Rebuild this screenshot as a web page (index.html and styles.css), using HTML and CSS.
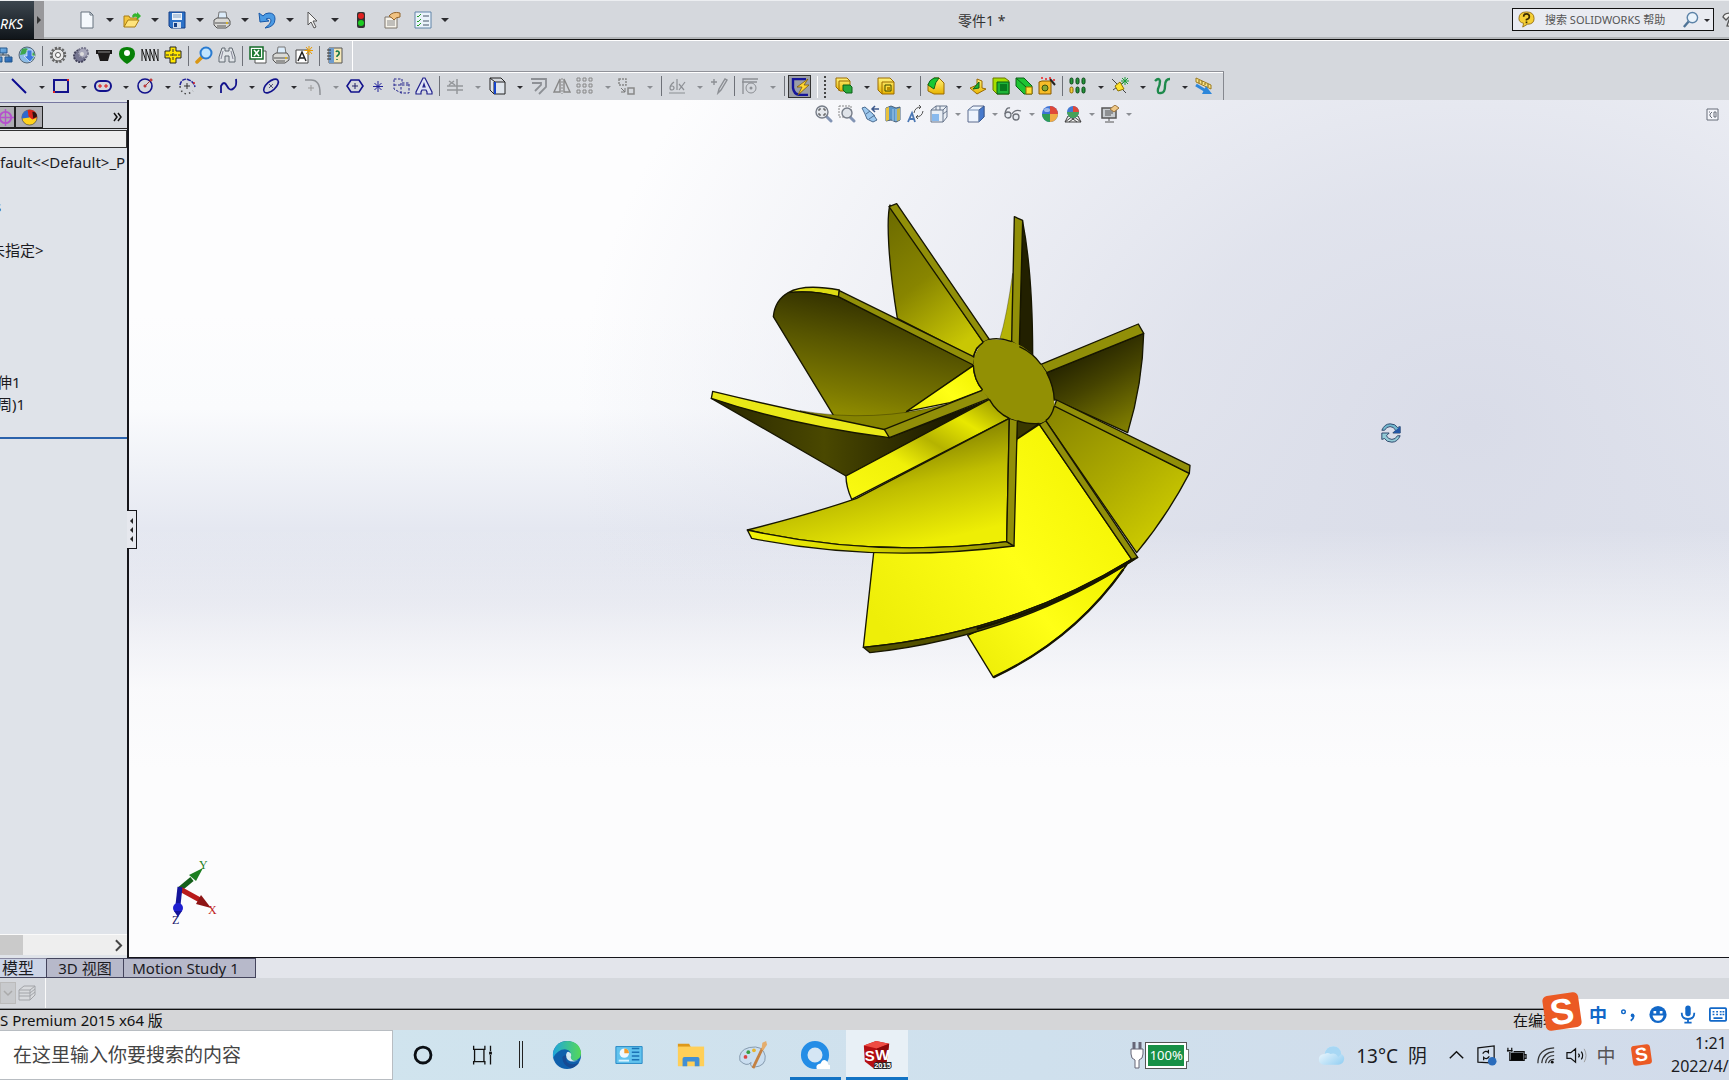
FILE: index.html
```html
<!DOCTYPE html>
<html lang="zh-CN">
<head>
<meta charset="utf-8">
<title>零件1</title>
<link rel="stylesheet" href="styles.css">
</head>
<body>
<svg class="sprite" aria-hidden="true">
  <defs>
    <linearGradient id="gBlue" x1="0" y1="0" x2="1" y2="1"><stop offset="0" stop-color="#8cc8f4"/><stop offset="1" stop-color="#1c5cae"/></linearGradient>
    <linearGradient id="gGold" x1="0" y1="0" x2="0" y2="1"><stop offset="0" stop-color="#fff27a"/><stop offset="1" stop-color="#e8b400"/></linearGradient>
    <linearGradient id="gEdge" x1="0" y1="0" x2="1" y2="0"><stop offset="0" stop-color="#1fa5dc"/><stop offset="1" stop-color="#56d957"/></linearGradient>
    <linearGradient id="gCloud" x1="0" y1="0" x2="1" y2="1"><stop offset="0" stop-color="#fff"/><stop offset="1" stop-color="#8fcdf2"/></linearGradient>
  </defs>
  <symbol id="new" viewBox="0 0 18 18"><path d="M3 1h9l3 3v13H3z" fill="#f4f8fc" stroke="#66727f"/><path d="M12 1v3h3" fill="none" stroke="#66727f"/></symbol>
  <symbol id="open" viewBox="0 0 18 18"><path d="M1 16V5h5l1 2h7v3" fill="#f4c63c" stroke="#a87c12"/><path d="M1 16l4-7h11l-4 7z" fill="#ffe47c" stroke="#a87c12"/><path d="M9 5q2-4 5-2V1l4 4-4 4V6q-3-1-4 1z" fill="#35b52d"/></symbol>
  <symbol id="save" viewBox="0 0 18 18"><path d="M1 1h16v16H3l-2-2z" fill="#2d72c8" stroke="#153f86"/><path d="M4 2h10v7H4z" fill="#eef4fa"/><path d="M5 4h8M5 6h8" stroke="#7f9fc4"/><path d="M5 11h8v6H5z" fill="#cfdcec"/><path d="M6 12h3v4H6z" fill="#153f86"/></symbol>
  <symbol id="print" viewBox="0 0 18 18"><path d="M5 8l1-7h7l1 7" fill="#dcecfa" stroke="#777"/><path d="M1 9l3-2h11l2 3v4l-4 3H4l-3-3z" fill="#d9d9d6" stroke="#555"/><path d="M2 12h14M4 15h9" stroke="#555"/><circle cx="14" cy="12" r="1" fill="#e7b90e"/></symbol>
  <symbol id="undo" viewBox="0 0 18 18"><path d="M1 2l1 9 9-1-3-2q5-2 5 2 0 3-6 7 10-1 10-9 0-6-6-6-4 0-6 3z" fill="#4b9be4" stroke="#1959a8"/></symbol>
  <symbol id="cursor" viewBox="0 0 18 18"><path d="M5 1v13l3-3 3 6 2-1-3-6h4z" fill="#f5f5f5" stroke="#555"/></symbol>
  <symbol id="traffic" viewBox="0 0 18 18"><rect x="5" y="1" width="8" height="16" rx="2" fill="#333"/><circle cx="9" cy="5" r="3" fill="#e02020"/><circle cx="9" cy="12" r="3" fill="#1ccc22"/></symbol>
  <symbol id="props" viewBox="0 0 18 18"><path d="M2 6h12v11H2z" fill="#f6f3ea" stroke="#7c756b"/><path d="M4 10h8M4 12h8M4 14h8" stroke="#8a8a8a"/><path d="M6 5q4-5 11-3v4q-4 0-6 3L9 7z" fill="#f1c382" stroke="#94642a"/></symbol>
  <symbol id="list" viewBox="0 0 18 18"><path d="M1 1h16v16H1z" fill="#eaf2fa" stroke="#6084a8"/><path d="M3 5l1 1 3-3M3 10l1 1 3-3M3 14l1 1 3-3" stroke="#28a028" fill="none"/><path d="M9 5h6M9 10h6M9 14h6" stroke="#456"/></symbol>
  <symbol id="tree" viewBox="0 0 18 18"><path d="M8 5v4M4 13V9h10v4" stroke="#345" fill="none"/><path d="M5 2h7v5H5zM0 11h7v5H0zM10 11h7v5h-7z" fill="url(#gBlue)" stroke="#24588c"/></symbol>
  <symbol id="globe" viewBox="0 0 18 18"><circle cx="9" cy="9" r="8" fill="#8cbce6" stroke="#567"/><path d="M4 3q6-2 6 1L7 8l-5 1zM11 13l4-7 2 3-2 5z" fill="#3fa64d"/><path d="M9 4h5v6h3l-5 6-6-6h3z" fill="#3d78dc" stroke="#fff" stroke-width=".6"/></symbol>
  <symbol id="gear" viewBox="0 0 18 18"><circle cx="9" cy="9" r="7" fill="none" stroke="#666" stroke-width="2.5" stroke-dasharray="2.2 1.5"/><circle cx="9" cy="9" r="6" fill="#e8e8e8" stroke="#555"/><circle cx="9" cy="9" r="2.5" fill="#fff" stroke="#555"/></symbol>
  <symbol id="gear2" viewBox="0 0 18 18"><ellipse cx="8" cy="10" rx="6" ry="6" fill="#777793" stroke="#44445c" stroke-width="2" stroke-dasharray="2 1"/><circle cx="11" cy="7" r="5" fill="#a8a8bb" stroke="#77778d" stroke-width="2" stroke-dasharray="2 1"/><circle cx="10" cy="8" r="2" fill="#ddd"/></symbol>
  <symbol id="cup" viewBox="0 0 18 18"><path d="M1 4h16v4h-2l-2 7H5L3 8H1z" fill="#1c1a1a"/><path d="M3 6h12" stroke="#888"/></symbol>
  <symbol id="cam" viewBox="0 0 18 18"><path d="M9 1q8 0 8 7 0 5-8 10Q1 13 1 8q0-7 8-7z" fill="#078007"/><circle cx="9" cy="7" r="3" fill="#fff"/></symbol>
  <symbol id="spring" viewBox="0 0 18 18"><path d="M1 15V3l4 12V3l4 12V3l4 12V3l4 12V3" fill="none" stroke="#181818" stroke-linejoin="bevel"/></symbol>
  <symbol id="plus" viewBox="0 0 18 18"><path d="M6 1h6v4h5v7h-5v5H6v-5H1V5h5z" fill="#ffe600" stroke="#222"/><path d="M2 9h14M9 3v12" stroke="#333" stroke-dasharray="3 1"/></symbol>
  <symbol id="lens" viewBox="0 0 18 18"><path d="M7 11l-5 5" stroke="#d99714" stroke-width="3.5" stroke-linecap="round"/><circle cx="11" cy="7" r="5.5" fill="#bfe4ff" stroke="#2a7bd0" stroke-width="2"/></symbol>
  <symbol id="bino" viewBox="0 0 18 18"><path d="M4 2h3v3h4V2h3l3 9v5h-6v-6H7v6H1v-5z" fill="#e0e4e8" stroke="#606870"/><path d="M5 5l-2 8M13 5l2 8" stroke="#889"/></symbol>
  <symbol id="excel" viewBox="0 0 18 18"><path d="M6 5h11v12H6z" fill="#fff" stroke="#555"/><path d="M1 1h13v12H1z" fill="#fff" stroke="#146b28" stroke-width="1.5"/><path d="M3 3h9v8H3z" fill="#1d7a33"/><path d="M5 4l5 6M10 4l-5 6" stroke="#fff" stroke-width="1.5"/></symbol>
  <symbol id="note" viewBox="0 0 18 18"><path d="M1 4h12v13H1z" fill="#fff" stroke="#444"/><path d="M3 15l4-9 4 9M5 12h4" fill="none" stroke="#222" stroke-width="1.5"/><path d="M14 0v9M9.500 4.500h9M11 1l6 7M17 1l-6 7" stroke="#e99b00"/></symbol>
  <symbol id="book" viewBox="0 0 18 18"><path d="M3 2h13v15H3z" fill="#f5e7b8" stroke="#555"/><path d="M3 2h5v15H3z" fill="#6e9ccc"/><path d="M1 4h4M1 7h4M1 10h4M1 13h4" stroke="#333"/><path d="M10 6q1-2 3 0 1 2-2 4v1M11 13v1" stroke="#174" stroke-width="1.500" fill="none"/></symbol>
  <symbol id="line" viewBox="0 0 18 18"><path d="M2 2l14 14" stroke="#0a0a90" stroke-width="2"/></symbol>
  <symbol id="rect" viewBox="0 0 18 18"><path d="M2 3h14v12H2z" fill="none" stroke="#12128c" stroke-width="2"/><path d="M1 14h2v2H1zM15 2h2v2h-2z" fill="#d22"/></symbol>
  <symbol id="slot" viewBox="0 0 18 18"><rect x="1" y="4" width="16" height="10" rx="5" fill="none" stroke="#12128c" stroke-width="2"/><path d="M5 8h2v2H5zM11 8h2v2h-2z" fill="none" stroke="#d11"/></symbol>
  <symbol id="circle" viewBox="0 0 18 18"><circle cx="9" cy="9" r="7" fill="none" stroke="#12128c" stroke-width="1.600"/><path d="M9 9l6-6" stroke="#933"/><path d="M8 8h2v2H8zM14 2h2v2h-2z" fill="#d66" stroke="#a11" stroke-width=".6"/></symbol>
  <symbol id="arc" viewBox="0 0 18 18"><path d="M2 8q2-8 9-5 5 2 6 7" fill="none" stroke="#22229a" stroke-width="1.500" stroke-dasharray="4 1"/><path d="M2 9q1 8 8 8l5-3" fill="none" stroke="#444" stroke-width="1.500" stroke-dasharray="1.500 3"/><path d="M9 6v6M6 9h6" stroke="#333"/><circle cx="16" cy="6" r="1" fill="#d22"/></symbol>
  <symbol id="spline" viewBox="0 0 18 18"><path d="M1 16V9q3-6 6 0t7 2q3-2 2-9" fill="none" stroke="#12128c" stroke-width="1.800"/></symbol>
  <symbol id="ellipse" viewBox="0 0 18 18"><ellipse cx="9" cy="9" rx="9" ry="4.500" transform="rotate(-42 9 9)" fill="none" stroke="#12128c" stroke-width="1.600"/><path d="M7 7l4 4M11 7l-4 4" stroke="#557"/></symbol>
  <symbol id="fillet" viewBox="0 0 18 18"><path d="M1 3h6q9 0 9 13v2" fill="none" stroke="#8e9196" stroke-width="1.500"/><path d="M7 8v6M4 11h6" stroke="#999"/></symbol>
  <symbol id="hex" viewBox="0 0 18 18"><path d="M5 3h8l4 6-4 6H5L1 9z" fill="none" stroke="#12128c" stroke-width="1.600"/><path d="M9 6v6M6 9h6" stroke="#226"/></symbol>
  <symbol id="star" viewBox="0 0 18 18"><path d="M9 4v11M4 9.500h10M5.500 6l7 7M12.500 6l-7 7" stroke="#22229a"/></symbol>
  <symbol id="plane" viewBox="0 0 18 18"><path d="M2 2h8v4h7v10h-8l-7-4zM2 8h15M9 6v10" fill="none" stroke="#22228c" stroke-dasharray="2.500 1.500"/></symbol>
  <symbol id="text" viewBox="0 0 18 18"><path d="M1 17v-2l7-14h2l7 14v2h-5v-2l-1-2H7l-1 2v2zM8 10h2L9 7z" fill="#dfe3f5" stroke="#22228c" stroke-width="1.200"/></symbol>
  <symbol id="trim" viewBox="0 0 18 18"><path d="M1 9h16M1 13h16M11 2v15M3 4l6 4M3 8l5-4" fill="none" stroke="#94979b" stroke-width="1.500"/></symbol>
  <symbol id="cube" viewBox="0 0 18 18"><path d="M2 1l5 4h10v12H6l-4-4z" fill="#dfe5ec" stroke="#222"/><path d="M2 1h11l4 4M6 5v12" fill="none" stroke="#222"/><path d="M7 5v12" stroke="#1544cc" stroke-width="2"/></symbol>
  <symbol id="offset" viewBox="0 0 18 18"><path d="M1 2h15v8l-7 7M2 6h9v2l-6 6" fill="none" stroke="#8d9095" stroke-width="1.800"/></symbol>
  <symbol id="mirror" viewBox="0 0 18 18"><path d="M7 2v13H1zM11 2v13h6z" fill="none" stroke="#888" stroke-width="1.400"/><path d="M9 1v16" stroke="#888" stroke-dasharray="2 1"/></symbol>
  <symbol id="grid" viewBox="0 0 18 18"><path d="M1 1h3v3H1zM7 1h3v3H7zM13 1h3v3h-3zM1 7h3v3H1zM7 7h3v3H7zM13 7h3v3h-3zM1 13h3v3H1zM7 13h3v3H7zM13 13h3v3h-3z" fill="none" stroke="#888"/></symbol>
  <symbol id="move" viewBox="0 0 18 18"><path d="M1 2h7v6H1z" fill="none" stroke="#888" stroke-width="1.500" stroke-dasharray="2 1"/><path d="M10 11h6v6h-6z" fill="none" stroke="#888" stroke-width="1.500"/><path d="M3 11l4 4m0-4v4H3" fill="none" stroke="#777"/></symbol>
  <symbol id="dim" viewBox="0 0 18 18"><path d="M1 16h16M9 2v11M6 5q-4 3-4 6a2 2 0 1 0 4 0 2 2 0 0 0-4 0M11 13l6-8M11 7l5 6" fill="none" stroke="#8c8f94" stroke-width="1.200"/></symbol>
  <symbol id="pencil" viewBox="0 0 18 18"><path d="M1 5h6M4 2v6M8 16l1-4 6-10 2 1-6 10z" fill="none" stroke="#8c8f94" stroke-width="1.400"/></symbol>
  <symbol id="snap" viewBox="0 0 18 18"><path d="M2 17V2h15M1 5h15" fill="none" stroke="#8c8f94" stroke-width="1.300"/><circle cx="10" cy="11" r="5" fill="none" stroke="#8c8f94"/><circle cx="10" cy="11" r="1.500" fill="#8c8f94"/></symbol>
  <symbol id="sketch" viewBox="0 0 18 18"><path d="M15 1H2v9q1 7 8 7h7" fill="none" stroke="#15159a" stroke-width="2.400"/><path d="M17 1L6 9h5l-4 8L18 7h-5z" fill="#ffd633" stroke="#7e5b08" stroke-width=".8"/></symbol>
  <symbol id="extrude" viewBox="0 0 18 18"><path d="M1 1h11l3 3v10H5l-4-4z" fill="url(#gGold)" stroke="#9b6a00"/><path d="M4 4h11M4 4v10" stroke="#9b6a00" fill="none"/><path d="M8 8h7l2 2v6h-6l-3-3z" fill="#29a93c" stroke="#0d6118"/></symbol>
  <symbol id="cut" viewBox="0 0 18 18"><path d="M1 1h12l4 4v12H5l-4-4z" fill="url(#gGold)" stroke="#9b6a00"/><path d="M5 5h12M5 5v12" stroke="#9b6a00" fill="none"/><path d="M8 8h6v6H8z" fill="#ffd93a" stroke="#3a4a00"/><path d="M10 10h3v3h-3z" fill="#b78b00"/></symbol>
  <symbol id="fil3" viewBox="0 0 18 18"><path d="M1 7l6-6h5l5 5v11H7l-6-3z" fill="url(#gGold)" stroke="#9b6a00"/><path d="M1 8q1-5 6-7h5Q8 5 7 12z" fill="#16c832" stroke="#0d6118"/></symbol>
  <symbol id="rib" viewBox="0 0 18 18"><path d="M1 11l7-3V2l5 2v7l4 1-9 5z" fill="url(#gGold)" stroke="#9b6a00"/><path d="M4 12l6-7v6z" fill="#1db834" stroke="#0d6118"/></symbol>
  <symbol id="shell" viewBox="0 0 18 18"><path d="M1 1h12l4 3v13H5l-4-4z" fill="#a6e000" stroke="#6b7400"/><path d="M5 5h12v12H5z" fill="#1fb437" stroke="#0b5d17"/><path d="M8 7h7v7H8z" fill="#087a1e"/></symbol>
  <symbol id="draft" viewBox="0 0 18 18"><path d="M1 1h8l8 8v8H9L1 9z" fill="#1ec432" stroke="#0d6118"/><path d="M11 10h6v7h-6z" fill="#ffdf38" stroke="#9b6a00"/><path d="M1 1l10 9" stroke="#0d6118"/></symbol>
  <symbol id="wizard" viewBox="0 0 18 18"><path d="M1 5l3-1h9v13H1z" fill="#f7bc28" stroke="#8a5a00"/><circle cx="7" cy="11" r="3" fill="#87a838" stroke="#40510a"/><path d="M12 2l5 6" stroke="#222" stroke-width="2"/><path d="M3 1h2M7 2h2M11 1h2M15 3h2" stroke="#e22" stroke-width="1.500"/></symbol>
  <symbol id="pat" viewBox="0 0 18 18"><g fill="#25953a" stroke="#0b4417"><rect x="1" y="1" width="3" height="6" rx="1.500"/><rect x="7" y="1" width="3" height="6" rx="1.500"/><rect x="13" y="1" width="3" height="6" rx="1.500"/><rect x="7" y="10" width="3" height="6" rx="1.500"/><rect x="13" y="10" width="3" height="6" rx="1.500"/></g><rect x="1" y="10" width="3" height="6" rx="1.500" fill="#f0cb3a" stroke="#8a6400"/></symbol>
  <symbol id="refgeo" viewBox="0 0 18 18"><path d="M1 2l14 14M2 13L13 5" stroke="#444"/><path d="M4 9l5-4 4 7-6 2z" fill="#ffe330" stroke="#8d7400"/><path d="M14 0v8M10 4h8M11 1l6 6M17 1l-6 6" stroke="#1a9c38"/></symbol>
  <symbol id="curve" viewBox="0 0 18 18"><path d="M2 4q4-4 5 0 0 4-2 8-1 5 3 4 4 0 4-7 0-7 5-7" fill="none" stroke="#1e8a4c" stroke-width="2.400"/></symbol>
  <symbol id="ruler" viewBox="0 0 18 18"><path d="M1 1l15 7v4L1 5z" fill="#fbe487" stroke="#9a7a20"/><path d="M4 3v3M7 4v3M10 6v2M13 7v3" stroke="#7a6010"/><path d="M1 8l10 6" stroke="#2d87da" stroke-width="3"/><path d="M11 9l6 8H7z" fill="#2d87da"/></symbol>
  <symbol id="zfit" viewBox="0 0 18 18"><path d="M11 11l5 5" stroke="#8294b4" stroke-width="3" stroke-linecap="round"/><circle cx="7" cy="7" r="6" fill="#e6e9ee" stroke="#777d88" stroke-width="1.400"/><path d="M4 6V4h2M8 4h2v2M10 8v2H8M6 10H4V8" fill="none" stroke="#444"/></symbol>
  <symbol id="zarea" viewBox="0 0 18 18"><path d="M1 1h12v11H1z" fill="none" stroke="#888" stroke-dasharray="2 1"/><path d="M12 12l4 4" stroke="#8294b4" stroke-width="3" stroke-linecap="round"/><circle cx="9" cy="8" r="5" fill="#dfe3e9" stroke="#777d88" stroke-width="1.400"/></symbol>
  <symbol id="prev" viewBox="0 0 18 18"><path d="M1 3l3-1 8 7 4 6-4 2-6-3-2-5z" fill="#9cc8ee" stroke="#4c6d92"/><path d="M5 9l4-3M8 14l6-4" stroke="#4c6d92"/><path d="M11 4h7M14 1l-3 3 3 3" fill="none" stroke="#3e5a8c" stroke-width="1.500"/></symbol>
  <symbol id="section" viewBox="0 0 18 18"><path d="M2 3l5-2 5 2 4-1v13l-4 2-5-2-5 1z" fill="#5b95c8" stroke="#496078"/><path d="M2 3l3-1v13l-3 1z" fill="#e8c23d"/><path d="M9 4v12M12 4v12" stroke="#a8cdea"/><path d="M13 4l3-1v12l-3 1z" fill="#c8b54b"/></symbol>
  <symbol id="orient" viewBox="0 0 18 18"><path d="M1 17l4-9 3 9M3 14h4" fill="none" stroke="#4c78b4" stroke-width="1.800"/><path d="M7 8q1-6 7-6l-2-2m2 2l-2 2M16 6q-1 6-7 6l2-2m-2 2l2 2" fill="none" stroke="#555"/></symbol>
  <symbol id="box" viewBox="0 0 18 18"><path d="M1 5l5-4h11v11l-4 5H1z" fill="#e9eef5" stroke="#66748a"/><path d="M1 5h12v12M13 5l4-4M6 1v4M10 1v4M13 9l4-3" fill="none" stroke="#66748a"/><path d="M2 9h7v7H2z" fill="#88b9ed"/></symbol>
  <symbol id="shade" viewBox="0 0 18 18"><path d="M1 5l5-4h11v11l-5 5H1z" fill="#edf4fd" stroke="#5c6b8c"/><path d="M12 5l5-4v11l-5 5z" fill="#4779cc" stroke="#3a5a94"/><path d="M1 5h11v12" fill="none" stroke="#7790b4"/></symbol>
  <symbol id="glasses" viewBox="0 0 18 18"><path d="M1 9q1-7 5-6M8 9q3-5 9-3" fill="none" stroke="#6c7078" stroke-width="1.300"/><circle cx="4" cy="10" r="3" fill="#e8ecf2" stroke="#6c7078" stroke-width="1.300"/><circle cx="12" cy="12" r="3" fill="#e8ecf2" stroke="#6c7078" stroke-width="1.300"/></symbol>
  <symbol id="ball" viewBox="0 0 18 18"><circle cx="9" cy="9" r="8" fill="#3d72d6"/><path d="M9 9V1a8 8 0 0 1 8 8z" fill="#e04838"/><path d="M9 9h8a8 8 0 0 1-8 8z" fill="#f0ac44"/><path d="M9 9v8a8 8 0 0 1-8-8z" fill="#2f9d54"/><ellipse cx="6" cy="5" rx="3" ry="2" fill="#fff" opacity=".5"/></symbol>
  <symbol id="scene" viewBox="0 0 18 18"><path d="M1 17l3-6h10l3 6zM1 17l8-6 8 6M5 11l8 6M13 11l-8 6" fill="#eee" stroke="#444"/><circle cx="9" cy="7" r="6" fill="#4279d2"/><path d="M9 7V1a6 6 0 0 1 6 6z" fill="#e04838"/><path d="M15 7a6 6 0 0 1-12 0z" fill="#46a15a"/></symbol>
  <symbol id="monitor" viewBox="0 0 18 18"><path d="M1 3h14v10H1z" fill="#c8ccd0" stroke="#555" stroke-width="1.500"/><path d="M4 6h8M4 8h8M4 10h6M8 13v3M4 17h9" stroke="#555"/><path d="M9 4l5-4 4 3-5 4z" fill="#efc887" stroke="#9b743e"/></symbol>
  <symbol id="appear" viewBox="0 0 18 18"><circle cx="9" cy="9" r="8" fill="#ffd21e" stroke="#333" stroke-width=".6"/><path d="M9 9L1 10A8 8 0 0 1 7 1z" fill="#2e68cf"/><path d="M7 1q7-1 9 4l1 4-5 2-4-3z" fill="#d8261c"/><path d="M12 3q5 0 5 5l-4 2z" fill="#301410"/></symbol>
  <symbol id="target" viewBox="0 0 18 18"><circle cx="9" cy="9" r="6" fill="none" stroke="#b651cd" stroke-width="2"/><path d="M9 0v18M0 9h18" stroke="#b651cd" stroke-width="1.500"/></symbol>
</svg>

<div class="app">
  <header class="titlebar">
    <div class="brand">RKS</div>
    <button class="brand-more" aria-label="展开菜单"></button>
    <nav class="quick" aria-label="快速访问">
      <button class="qb" aria-label="新建"><svg><use href="#new"/></svg></button><button class="caret" aria-label="新建选项"></button>
      <button class="qb" aria-label="打开"><svg><use href="#open"/></svg></button><button class="caret" aria-label="打开选项"></button>
      <button class="qb" aria-label="保存"><svg><use href="#save"/></svg></button><button class="caret" aria-label="保存选项"></button>
      <button class="qb" aria-label="打印"><svg><use href="#print"/></svg></button><button class="caret" aria-label="打印选项"></button>
      <button class="qb" aria-label="撤销"><svg><use href="#undo"/></svg></button><button class="caret" aria-label="撤销选项"></button>
      <button class="qb" aria-label="选择"><svg><use href="#cursor"/></svg></button><button class="caret" aria-label="选择选项"></button>
      <button class="qb wide" aria-label="重建模型"><svg><use href="#traffic"/></svg></button>
      <button class="qb wide" aria-label="文件属性"><svg><use href="#props"/></svg></button>
      <button class="qb wide" aria-label="选项"><svg><use href="#list"/></svg></button><button class="caret tight" aria-label="更多选项"></button>
    </nav>
    <h1 class="doc">零件1 *</h1>
    <div class="help">
      <svg class="help-q" viewBox="0 0 18 18"><path d="M9 1q8 0 8 7 0 6-7 6l-5 3 1-4Q1 12 1 8q0-7 8-7z" fill="#f5cf35" stroke="#997313"/><path d="M6 6q0-3 3-3t3 3q0 2-3 3v1M9 11v2" stroke="#3c2c00" stroke-width="1.800" fill="none"/></svg>
      <input type="text" aria-label="搜索帮助" placeholder="搜索 SOLIDWORKS 帮助">
      <button class="help-go" aria-label="搜索"><svg viewBox="0 0 18 18"><path d="M7 11l-5 6" stroke="#4f7396" stroke-width="2.500"/><circle cx="11" cy="7" r="5.500" fill="#eaf3fb" stroke="#5c83a8" stroke-width="1.500"/></svg></button>
      <button class="caret small" aria-label="搜索选项"></button>
    </div>
    <button class="help-tail" aria-label="帮助"><svg viewBox="0 0 18 18"><path d="M1 6q1-4 7-4t9 3l-2 3-4-2H7L4 9zM5 15l2-6h6l3 7z" fill="#eee" stroke="#555" stroke-width="1.300"/></svg></button>
  </header>

  <div class="bar" role="toolbar" aria-label="工具">
    <div class="strip shifted">
      <button class="tb" aria-label="结构"><svg><use href="#tree"/></svg></button><button class="tb" aria-label="网络"><svg><use href="#globe"/></svg></button><i class="sep"></i>
      <button class="tb" aria-label="齿轮"><svg><use href="#gear"/></svg></button><button class="tb" aria-label="锥齿轮"><svg><use href="#gear2"/></svg></button><button class="tb" aria-label="型材"><svg><use href="#cup"/></svg></button><button class="tb" aria-label="凸轮"><svg><use href="#cam"/></svg></button><button class="tb" aria-label="弹簧"><svg><use href="#spring"/></svg></button><button class="tb" aria-label="键"><svg><use href="#plus"/></svg></button><i class="sep"></i>
      <button class="tb" aria-label="查看"><svg><use href="#lens"/></svg></button><button class="tb" aria-label="查找"><svg><use href="#bino"/></svg></button><i class="sep"></i>
      <button class="tb" aria-label="表格"><svg><use href="#excel"/></svg></button><button class="tb" aria-label="批量打印"><svg><use href="#print"/></svg></button><button class="tb" aria-label="注释"><svg><use href="#note"/></svg></button><i class="sep"></i>
      <button class="tb" aria-label="手册"><svg><use href="#book"/></svg></button>
    </div>
  </div>

  <div class="bar" role="toolbar" aria-label="草图与特征">
    <div class="strip sketchbar">
      <button class="tb" aria-label="直线"><svg><use href="#line"/></svg></button><button class="caret small" aria-label="直线选项"></button>
      <button class="tb" aria-label="矩形"><svg><use href="#rect"/></svg></button><button class="caret small" aria-label="矩形选项"></button>
      <button class="tb" aria-label="槽口"><svg><use href="#slot"/></svg></button><button class="caret small" aria-label="槽口选项"></button>
      <button class="tb" aria-label="圆"><svg><use href="#circle"/></svg></button><button class="caret small" aria-label="圆选项"></button>
      <button class="tb" aria-label="圆弧"><svg><use href="#arc"/></svg></button><button class="caret small" aria-label="圆弧选项"></button>
      <button class="tb" aria-label="样条曲线"><svg><use href="#spline"/></svg></button><button class="caret small" aria-label="样条选项"></button>
      <button class="tb" aria-label="椭圆"><svg><use href="#ellipse"/></svg></button><button class="caret small" aria-label="椭圆选项"></button>
      <button class="tb" aria-label="圆角"><svg><use href="#fillet"/></svg></button><button class="caret small dim" aria-label="圆角选项"></button>
      <button class="tb" aria-label="多边形"><svg><use href="#hex"/></svg></button><button class="tb" aria-label="点"><svg><use href="#star"/></svg></button><button class="tb" aria-label="基准面"><svg><use href="#plane"/></svg></button><button class="tb" aria-label="文字"><svg><use href="#text"/></svg></button><i class="sep"></i>
      <button class="tb" aria-label="剪裁"><svg><use href="#trim"/></svg></button><button class="caret small dim" aria-label="剪裁选项"></button>
      <button class="tb" aria-label="转换实体"><svg><use href="#cube"/></svg></button><button class="caret small" aria-label="转换选项"></button>
      <button class="tb" aria-label="等距"><svg><use href="#offset"/></svg></button><button class="tb" aria-label="镜向"><svg><use href="#mirror"/></svg></button><button class="tb" aria-label="阵列"><svg><use href="#grid"/></svg></button><button class="caret small dim" aria-label="阵列选项"></button>
      <button class="tb" aria-label="移动"><svg><use href="#move"/></svg></button><button class="caret small dim" aria-label="移动选项"></button><i class="sep"></i>
      <button class="tb" aria-label="几何关系"><svg><use href="#dim"/></svg></button><button class="caret small dim" aria-label="几何关系选项"></button>
      <button class="tb" aria-label="修复草图"><svg><use href="#pencil"/></svg></button><i class="sep"></i>
      <button class="tb" aria-label="捕捉"><svg><use href="#snap"/></svg></button><button class="caret small dim" aria-label="捕捉选项"></button><i class="sep"></i>
      <button class="tb on" aria-label="快速草图"><svg><use href="#sketch"/></svg></button>
      <i class="grip"></i>
      <button class="tb" aria-label="拉伸"><svg><use href="#extrude"/></svg></button><button class="caret small" aria-label="拉伸选项"></button>
      <button class="tb" aria-label="切除"><svg><use href="#cut"/></svg></button><button class="caret small" aria-label="切除选项"></button><i class="sep"></i>
      <button class="tb" aria-label="倒圆角"><svg><use href="#fil3"/></svg></button><button class="caret small" aria-label="倒圆角选项"></button>
      <button class="tb" aria-label="筋"><svg><use href="#rib"/></svg></button><button class="tb" aria-label="抽壳"><svg><use href="#shell"/></svg></button><button class="tb" aria-label="拔模"><svg><use href="#draft"/></svg></button><button class="tb" aria-label="异型孔"><svg><use href="#wizard"/></svg></button><i class="sep"></i>
      <button class="tb" aria-label="线性阵列"><svg><use href="#pat"/></svg></button><button class="caret small" aria-label="线性阵列选项"></button>
      <button class="tb" aria-label="参考几何体"><svg><use href="#refgeo"/></svg></button><button class="caret small" aria-label="参考选项"></button>
      <button class="tb" aria-label="曲线"><svg><use href="#curve"/></svg></button><button class="caret small" aria-label="曲线选项"></button>
      <button class="tb" aria-label="测量"><svg><use href="#ruler"/></svg></button>
    </div>
  </div>

  <main class="work">
    <aside class="panel">
      <div class="ptabs">
        <button class="ptab first" aria-label="尺寸"><svg><use href="#target"/></svg></button>
        <button class="ptab" aria-label="外观"><svg><use href="#appear"/></svg></button>
        <button class="more" aria-label="更多标签"><svg viewBox="0 0 10 10"><path d="M1 1l3 4-3 4M5 1l3 4-3 4" fill="none" stroke="#111" stroke-width="1.500"/></svg></button>
      </div>
      <input class="filter" type="text" aria-label="过滤">
      <ul class="feature-tree">
        <li>fault&lt;&lt;Default&gt;_P</li><li></li><li class="clipped">s</li><li></li><li class="clipped wide-clip">未指定&gt;</li>
        <li></li><li></li><li></li><li></li><li></li><li class="nudge">伸1</li><li class="nudge">周)1</li><li></li>
      </ul>
      <div class="rollback"></div>
      <div class="hscroll"><span class="thumb"></span><button aria-label="向右滚动"><svg viewBox="0 0 10 10"><path d="M3 1l4 4-4 4" fill="none" stroke="#444" stroke-width="1.500"/></svg></button></div>
    </aside>

    <section class="viewport" aria-label="图形区域">
      <button class="splitter" aria-label="折叠面板"><i></i><i></i><i></i></button>
      <div class="hud">
        <button class="tb" aria-label="整屏显示"><svg><use href="#zfit"/></svg></button><button class="tb" aria-label="局部放大"><svg><use href="#zarea"/></svg></button><button class="tb" aria-label="上一视图"><svg><use href="#prev"/></svg></button><button class="tb" aria-label="剖面视图"><svg><use href="#section"/></svg></button><button class="tb" aria-label="动态视图"><svg><use href="#orient"/></svg></button><button class="tb" aria-label="视图定向"><svg><use href="#box"/></svg></button><button class="caret small tight dim" aria-label="定向选项"></button>
        <button class="tb" aria-label="显示样式"><svg><use href="#shade"/></svg></button><button class="caret small tight dim" aria-label="样式选项"></button>
        <button class="tb" aria-label="隐藏显示"><svg><use href="#glasses"/></svg></button><button class="caret small tight dim" aria-label="显示选项"></button>
        <button class="tb" aria-label="编辑外观"><svg><use href="#ball"/></svg></button><button class="tb" aria-label="应用布景"><svg><use href="#scene"/></svg></button><button class="caret small tight dim" aria-label="布景选项"></button>
        <button class="tb" aria-label="视图设定"><svg><use href="#monitor"/></svg></button><button class="caret small tight dim" aria-label="视图选项"></button>
      </div>
      <button class="pane" aria-label="任务窗格"><svg viewBox="0 0 13 13"><path d="M1 1h11v11H1z" fill="#f4f5fa" stroke="#666c78"/><path d="M8 4h2v5H8zM6 4L4 6v2l2 2M3 4h1" fill="none" stroke="#666c78"/></svg></button>

      <svg class="model" viewBox="0 0 1560 1500" role="img" aria-label="叶轮模型">
        <defs>
          <linearGradient id="f1" x1=".1" y1="0" x2=".6" y2="1"><stop offset="0" stop-color="#6c6b00"/><stop offset=".5" stop-color="#888500"/><stop offset="1" stop-color="#c9c704"/></linearGradient>
          <linearGradient id="f2" x1=".6" y1=".1" x2=".35" y2="1"><stop offset="0" stop-color="#343200"/><stop offset=".35" stop-color="#575500"/><stop offset=".75" stop-color="#7c7900"/><stop offset="1" stop-color="#969300"/></linearGradient>
          <linearGradient id="f3" x1=".2" y1=".1" x2=".7" y2="1"><stop offset="0" stop-color="#171600"/><stop offset=".5" stop-color="#454300"/><stop offset="1" stop-color="#7d7b00"/></linearGradient>
          <linearGradient id="f4" x1="0" y1="0" x2=".8" y2="1"><stop offset="0" stop-color="#868300"/><stop offset=".5" stop-color="#aaa800"/><stop offset="1" stop-color="#d2d000"/></linearGradient>
          <linearGradient id="f5" x1=".3" y1=".35" x2=".6" y2="1"><stop offset="0" stop-color="#8c8a00"/><stop offset=".4" stop-color="#c0be00"/><stop offset="1" stop-color="#eeee05"/></linearGradient>
          <linearGradient id="f6" x1="0" y1="1" x2="1" y2="0"><stop offset="0" stop-color="#fbfb12"/><stop offset=".35" stop-color="#f0f008"/><stop offset=".55" stop-color="#b5b300"/><stop offset=".75" stop-color="#e8e800"/><stop offset="1" stop-color="#8a8800"/></linearGradient>
          <linearGradient id="f7" x1="0" y1="0" x2=".9" y2="0"><stop offset="0" stop-color="#282600"/><stop offset=".45" stop-color="#4a4800"/><stop offset="1" stop-color="#171500"/></linearGradient>
          <linearGradient id="f8" x1="0" y1=".8" x2="1" y2=".2"><stop offset="0" stop-color="#eeee08"/><stop offset=".5" stop-color="#ffff16"/><stop offset="1" stop-color="#f2f200"/></linearGradient>
          <linearGradient id="f9" x1="0" y1="0" x2="1" y2="0"><stop offset="0" stop-color="#f4f407"/><stop offset=".55" stop-color="#cbc900"/><stop offset="1" stop-color="#8f8d00"/></linearGradient>
        </defs>
        <g stroke="#171600" stroke-width="4" stroke-linejoin="round">
          <path d="M600 45C590 80 592 200 622 385L700 425 850 502 860 475 880 457Z" fill="url(#f1)"/>
          <path d="M597 50L620 41 898 448 880 457Z" fill="#918f08"/>
          <path d="M968 250Q950 380 930 445L965 455Z" fill="#b4b208" stroke-width="1"/>
          <path d="M998 95Q1028 250 1028 495L988 470Z" fill="#222000"/>
          <path d="M973 80L998 91 988 470 965 455Z" fill="#918f08"/>
          <path d="M1361 430Q1358 580 1313 728L1100 632L1060 600L1070 548Z" fill="url(#f3)"/>
          <path d="M1345 402L1361 430 1070 548 1053 523Z" fill="#918f08"/>
          <path d="M1093 648L1498 850Q1430 980 1340 1088L1067 692Z" fill="url(#f4)"/>
          <path d="M1100 630L1500 826 1498 850 1093 648Z" fill="#918f08"/>
          <path d="M833 1336L910 1462Q1150 1350 1310 1125Z" fill="url(#f8)"/>
          <path d="M910 1462Q1150 1350 1300 1138" fill="none" stroke-width="7"/>
          <path d="M295 308Q340 280 448 300L445 322Q370 300 295 308Z" fill="#dcdb13"/>
          <path d="M250 380Q255 330 295 308 370 300 445 320L852 525 645 670 600 700 445 700Z" fill="url(#f2)"/>
          <path d="M448 302L855 502 850 525 445 320Z" fill="#918f08"/>
          <path d="M650 664L850 527Q852 570 878 600L780 638Z" fill="url(#f8)"/>
          <path d="M330 662Q550 700 770 643L600 735Z" fill="#858300" stroke-width="1"/>
          <path d="M64 625L598 743 900 628 468 858Z" fill="url(#f7)"/>
          <path d="M68 604Q320 665 590 720L598 743Q300 705 64 625Z" fill="#e9e817"/>
          <path d="M583 718L880 600 898 625 598 743Z" fill="#918f08"/>
          <path d="M468 858L898 628 958 685 485 928Q468 890 468 858Z" fill="url(#f6)"/>
          <path d="M980 692L1048 700 980 748Z" fill="#393700"/>
          <path d="M1048 703L1325 1108Q960 1330 520 1372L553 1070 950 1055 980 748Z" fill="url(#f8)"/>
          <path d="M520 1372Q960 1330 1325 1108L1343 1102Q980 1340 540 1388Z" fill="#535100"/>
          <path d="M860 1316Q1110 1248 1334 1105" fill="none" stroke-width="8"/>
          <path d="M1067 692L1343 1102 1325 1108 1048 703Z" fill="#918f08"/>
          <path d="M172 1020Q370 970 500 925L958 685 950 1055Q560 1105 172 1020Z" fill="url(#f5)"/>
          <path d="M172 1020Q560 1105 950 1055L972 1068Q560 1120 185 1045Z" fill="url(#f9)"/>
          <path d="M958 685L982 692 972 1068 950 1055Z" fill="#918f08"/>
          <path d="M850 525Q850 485 880 457 900 440 965 455 1015 472 1053 523 1095 580 1093 648 1087 680 1067 692 1040 710 982 692 930 680 898 628 858 590 850 525Z" fill="#929004" stroke="none"/>
          <path d="M850 502Q855 475 880 457M898 448Q930 442 965 455M988 470Q1028 488 1053 523M1070 548Q1092 590 1093 632M1093 648Q1085 680 1067 692M1048 700Q1010 703 982 692M958 685Q920 668 898 628M878 600Q852 570 850 525" fill="none"/>
        </g>
      </svg>

      <svg class="spin" viewBox="0 0 24 24" aria-hidden="true"><path d="M2 9q3-7 9-7 6 0 8 4l3-1v7h-8l3-3q-2-4-6-4-4 0-6 4z" fill="#74b9cf" stroke="#263f66"/><path d="M22 15q-3 7-9 7-6 0-8-4l-3 1v-7h8l-3 3q2 4 6 4t6-4z" fill="#93cbd6" stroke="#263f66"/><path d="M16 10l6-5v7h-7z" fill="#2356a5"/></svg>

      <svg class="triad" viewBox="0 0 48 72" aria-hidden="true">
        <path d="M9 35L21 25" stroke="#145f1a" stroke-width="5"/><path d="M18 21l14-7-7 13z" fill="#1b7e20"/>
        <path d="M9 35l20 11" stroke="#b81a1a" stroke-width="5"/><path d="M30 41l10 13-15-4z" fill="#8e1515"/>
        <path d="M9 33L7 51" stroke="#15159a" stroke-width="5"/><circle cx="7" cy="54" r="5" fill="#2020d0"/><path d="M3 57h8l-4 6z" fill="#15159a"/>
        <text x="28" y="15" fill="#1b7e20">Y</text><text x="37" y="60" fill="#c02020">X</text><text x="1" y="70" fill="#15156a">Z</text>
      </svg>
    </section>
  </main>

  <nav class="sheets" aria-label="视图标签">
    <button class="sheet active">模型</button><button class="sheet">3D 视图</button><button class="sheet study">Motion Study 1</button>
  </nav>
  <div class="config">
    <button class="combo" aria-label="配置"><svg viewBox="0 0 10 10"><path d="M1 3l4 4 4-4" fill="none" stroke="#aaa" stroke-width="1.500"/></svg></button>
    <button class="stack" aria-label="图层"><svg viewBox="0 0 18 18"><path d="M1 6l5-4h11v9l-5 5H1zM1 6h11v10M12 6l5-4M1 9h11l5-4M1 12h11l5-4" fill="#d8dadd" stroke="#a2a4a8"/></svg></button>
  </div>
  <footer class="status"><span>S Premium 2015 x64 版</span><span class="editing">在编辑</span></footer>

  <div class="taskbar">
    <input class="search" type="text" aria-label="搜索" placeholder="在这里输入你要搜索的内容">
    <button class="app-btn" aria-label="语音助手"><svg viewBox="0 0 32 32"><circle cx="16" cy="16" r="8.500" fill="none" stroke="#0b0f14" stroke-width="3"/></svg></button>
    <button class="app-btn" aria-label="任务视图"><svg viewBox="0 0 32 32"><path d="M6 6v4h12V6M6 26v-3h12v3M7 10v13M17 10v13M24 6v6M24 16v10" fill="none" stroke="#111" stroke-width="1.400"/><path d="M22.500 12.500h3v3h-3z" fill="#111"/></svg></button>
    <i class="bars"></i>
    <button class="app-btn" aria-label="浏览器"><svg viewBox="0 0 32 32"><circle cx="16" cy="16" r="15" fill="#0f60ac"/><path d="M1 14Q4 1 17 1q13 1 14 13 0 7-8 8-5 0-3-4 1-7-5-8Q7 9 1 19z" fill="url(#gEdge)"/><path d="M11 18q0 9 9 12 5-1 9-6-6 3-11 1-5-3-2-8-2-2-5 1z" fill="#174b93"/><path d="M20 18q1-2 0-4-4-4-5 2 0 7 8 7l5-1q-8 1-8-4z" fill="#d6e8f1"/></svg></button>
    <button class="app-btn" aria-label="控制面板"><svg viewBox="0 0 32 32"><path d="M2 7h28v18H2z" fill="#61c3ee" stroke="#2386c4"/><circle cx="11" cy="14" r="5" fill="#eef8fe"/><path d="M11 14V9a5 5 0 0 1 5 5z" fill="#f39c2c"/><path d="M19 9h8M19 13h8M19 17h8M19 21h8" stroke="#1b73b5" stroke-width="1.500"/><path d="M5 22h11" stroke="#d6f2ff" stroke-width="2"/></svg></button>
    <button class="app-btn" aria-label="文件资源管理器"><svg viewBox="0 0 32 32"><path d="M2 4h12l2 4H2z" fill="#de991b"/><path d="M2 7h28v21H2z" fill="#ffcf58"/><path d="M7 28v-8q0-2 2-2h14q2 0 2 2v8h-5v-5h-8v5z" fill="#418fd5"/></svg></button>
    <button class="app-btn" aria-label="画图"><svg viewBox="0 0 32 32"><path d="M2 22Q0 11 12 8q15-3 17 9 1 11-12 12-5-1-3-5-5 5-12-2z" fill="#cadef0" stroke="#8095aa"/><circle cx="8" cy="18" r="2" fill="#d44"/><circle cx="11" cy="13" r="2" fill="#3a9d41"/><circle cx="17" cy="11" r="2" fill="#e7b52e"/><path d="M16 30L26 9" stroke="#c48142" stroke-width="3"/><path d="M25 10l1-7 4-2 1 4-4 6z" fill="#e4ad6d"/></svg></button>
    <button class="app-btn running" aria-label="云浏览器"><svg viewBox="0 0 32 32"><circle cx="16" cy="16" r="11.500" fill="#d5e6f4" stroke="#248de6" stroke-width="7"/><path d="M18 31q-2-5 4-6 2-5 6-3 2 1 2 4 4 1 2 5z" fill="#fff"/></svg></button>
    <button class="app-btn current" aria-label="SW 2015"><svg viewBox="0 0 32 32"><path d="M2 7l13-5 14 3-3 21-14 5-9-7z" fill="#b50f12"/><path d="M2 7l13-5 14 3-13 5z" fill="#ee4b43"/><path d="M16 10l13-5-3 21-11 5z" fill="#8d090b"/><text x="3" y="23" class="sw">S</text><text x="14" y="22" class="sw">W</text><text x="13" y="31" class="yr">2015</text></svg></button>
    <div class="power"><svg class="plug" viewBox="0 0 14 28"><path d="M4 1v7M10 1v7" stroke="#667" stroke-width="3"/><path d="M1 8h12v5q0 5-4 6v8H5v-8q-4-1-4-6z" fill="#fff" stroke="#667"/></svg><span class="battery">100%</span><i class="nub"></i></div>
    <div class="weather"><svg viewBox="0 0 28 24"><path d="M6 22q-6-1-5-7 1-4 6-4 1-8 9-8 7 0 8 8 4 2 3 6-1 5-6 5z" fill="url(#gCloud)"/><path d="M7 11q1-8 9-8 7 0 8 8l-3 3q-3-5-8-3-3-2-6 0z" fill="#a7d7f4"/></svg><span>13°C&nbsp; 阴</span></div>
    <div class="tray">
      <button aria-label="显示隐藏图标"><svg viewBox="0 0 22 22"><path d="M4 14l7-7 7 7" fill="none" stroke="#111" stroke-width="1.500"/></svg></button>
      <button aria-label="更新"><svg viewBox="0 0 22 22"><path d="M2 3l17-2v18l-17-1z" fill="none" stroke="#111" stroke-width="1.300"/><path d="M7 9q3-4 6-1V5M14 12q-3 4-6 1v3" fill="none" stroke="#111" stroke-width="1.300"/><circle cx="17" cy="17" r="4.500" fill="#2a6cbc"/></svg></button>
      <button aria-label="电池"><svg viewBox="0 0 22 22"><path d="M4 8v8h15V7H8M19 10h2v4h-2M2 3v4M6 3v4M1 6h6M4 7v3" fill="none" stroke="#111" stroke-width="1.300"/><path d="M5 8h13v8H5z" fill="#050505"/></svg></button>
      <button aria-label="网络"><svg viewBox="0 0 22 22"><path d="M2 19Q2 4 19 3M6 19Q7 8 19 7M10 19q1-8 9-8M13 19q1-4 6-4" fill="none" stroke="#333" stroke-width="1.300"/><circle cx="17" cy="18" r="1.500" fill="#111"/></svg></button>
      <button aria-label="音量"><svg viewBox="0 0 22 22"><path d="M1 8h4l5-4v14l-5-4H1zM13 9q2 2 0 4M16 7q3 4 0 8" fill="none" stroke="#111" stroke-width="1.300"/><path d="M19 4q4 7 0 14" fill="none" stroke="#999"/></svg></button>
      <button class="lang" aria-label="输入语言">中</button>
      <button class="ime-mini" aria-label="输入法">S</button>
    </div>
    <div class="clock"><span class="time">1:21</span><span>2022/4/</span></div>
  </div>

  <div class="ime">
    <span class="ime-logo">S</span>
    <button class="ime-cn" aria-label="中文模式">中</button>
    <button aria-label="标点"><svg viewBox="0 0 20 20"><circle cx="5" cy="7" r="2" fill="none" stroke="#1268c8" stroke-width="1.600"/><circle cx="15" cy="11" r="2" fill="#1268c8"/><path d="M16 11q1 3-3 6" stroke="#1268c8" stroke-width="2" fill="none"/></svg></button>
    <button aria-label="表情"><svg viewBox="0 0 20 20"><circle cx="10" cy="10" r="9.500" fill="#1268c8"/><path d="M5 6h3v3H5zM12 6h3v3h-3zM4 11h12q-1 6-6 6t-6-6z" fill="#fff"/></svg></button>
    <button aria-label="语音输入"><svg viewBox="0 0 20 20"><rect x="7" y="0" width="6" height="12" rx="3" fill="#1268c8"/><path d="M3 8q0 7 7 7t7-7M10 15v4M6 19h8" fill="none" stroke="#1268c8" stroke-width="2"/></svg></button>
    <button aria-label="软键盘"><svg viewBox="0 0 20 20"><rect x="1" y="3" width="18" height="14" rx="1" fill="none" stroke="#1268c8" stroke-width="2"/><path d="M4 7h2M8 7h2M12 7h2M15 7h2M4 10h2M8 10h2M12 10h2M15 10h2M5 14h10" stroke="#1268c8" stroke-width="1.800"/></svg></button>
  </div>
</div>
</body>
</html>
```
FILE: styles.css
```css
* { box-sizing: border-box; }
body { margin: 0; overflow: hidden; font-family: "Noto Sans", "Noto Sans CJK SC", sans-serif; color: #1b1b1f; }
button { display: flex; align-items: center; justify-content: center; flex: none; margin: 0; padding: 0; border: 0; background: none; font: inherit; color: inherit; }
input { border: 0; padding: 0; font: inherit; }
svg { display: block; flex: none; }
.sprite { position: absolute; width: 0; height: 0; }
.app { position: relative; display: flex; flex-direction: column; height: 100vh; background: #d5d8dd; }

/* title bar */
.titlebar { display: flex; align-items: center; height: 40px; padding-bottom: 1px; border-top: 1px solid #eceef1; border-bottom: 1px solid #111; box-shadow: inset 0 -2px #b4b7ba; flex: none; }
.brand { display: flex; align-items: center; width: 34px; height: 38px; padding-top: 8px; background: linear-gradient(#3c464f, #10151a); color: #fff; font-size: 14px; font-style: italic; }
.brand-more { width: 10px; height: 38px; background: #98989b; }
.brand-more::before { content: ""; border: 4px solid transparent; border-left: 4px solid #333; border-right: 0; }
.quick { display: flex; margin-left: 31px; }
.qb { width: 24px; height: 24px; }
.qb.wide { width: 31px; }
.qb svg, .tb svg { width: 18px; height: 18px; }
.caret { width: 21px; }
.caret::before { content: ""; border: 4px solid transparent; border-top: 4px solid #2c2c30; border-bottom: 0; }
.caret.small { width: 19px; padding: 2px 0 0 4px; }
.caret.small::before { border-width: 3px 3px 0; }
.caret.dim::before { border-top-color: #8b8e93; }
.caret.tight { width: 14px; padding-left: 0; }
.doc { flex: 1; margin: 0 0 0 506px; font-size: 14px; font-weight: 400; color: #333; }
.help { display: flex; align-items: center; width: 202px; height: 23px; padding-left: 5px; border: 1px solid #111; background: #e9ebf1; }
.help-q, .help-go svg { width: 17px; height: 17px; }
.help input { flex: 1; min-width: 0; margin-left: 10px; background: none; font-size: 11px; color: #555; }
.help input::placeholder, .search::placeholder { color: inherit; opacity: 1; }
.help .caret { width: 14px; padding-left: 2px; }
.help-tail { width: 15px; padding-left: 8px; justify-content: flex-start; overflow: hidden; }
.help-tail svg { width: 18px; height: 18px; }

/* toolbars */
.bar { display: flex; height: 31px; flex: none; border-top: 1px solid #fff; }
.strip { display: flex; align-items: stretch; }
.bar + .bar { height: 29px; border-top: 0; }
.bar + .bar .strip { border-top: 1px solid #909299; box-shadow: inset 0 1px #fff; }
.shifted { padding-right: 6px; margin-left: -8px; border-right: 1px solid #fff; }
.sketchbar { padding: 0 8px 0 7px; border-right: 1px solid #85888f; }
.tb { width: 23px; height: 100%; }
.shifted .tb { height: 28px; }
.tb.on { height: 23px; margin-top: 3px; border: 1px solid #333; background: #9b9ea6; }
.sep { display: flex; justify-content: center; align-items: center; width: 8px; }
.sep::before { content: ""; width: 1px; height: 20px; background: #6e7178; }
.grip { display: flex; justify-content: space-between; width: 21px; padding: 4px 6px 2px; border: 0; }
.grip::before { content: ""; border-left: 1px solid #fff; }
.grip::after { content: ""; border-left: 2px dotted #444; }

/* work area */
.work { display: flex; flex: 1; min-height: 0; }
.panel { display: flex; flex-direction: column; width: 129px; flex: none; padding-top: 2px; border-right: 2px solid #15151a; background: #dfe3e9; overflow: hidden; }
.ptabs { display: flex; align-items: flex-end; height: 27px; flex: none; border-top: 1px solid #7878a0; border-bottom: 1px solid #222; background: #d5d8de; }
.ptab { width: 28px; height: 22px; border: 1px solid #222; background: #adadb2; }
.ptab svg { width: 17px; height: 17px; }
.ptab.first { width: 15px; border-left: 0; justify-content: flex-end; overflow: hidden; }
.more { width: 18px; height: 22px; margin-left: auto; }
.more svg { width: 12px; height: 10px; }
.filter { width: 127px; height: 18px; margin-top: 1px; border: 1px solid #333; border-left: 0; background: #ededed; flex: none; }
.feature-tree { margin: 3px 0 0; padding: 0; list-style: none; font-size: 15px; line-height: 22px; white-space: nowrap; }
.feature-tree li { height: 22px; }
.clipped { margin-left: -6px; }
.wide-clip { margin-left: -10px; }
.nudge { margin-left: -3px; }
.rollback { height: 2px; background: #2b62ab; flex: none; }
.hscroll { display: flex; justify-content: space-between; height: 21px; margin-top: auto; background: #eee; border-top: 1px solid #fafafa; margin-bottom: 3px; flex: none; }
.thumb { width: 23px; background: #cacaca; }
.hscroll button { width: 17px; }
.hscroll svg { width: 13px; height: 13px; }

.viewport { position: relative; flex: 1; min-width: 0; border-bottom: 1px solid #15151a;
  background:
    linear-gradient(rgba(252,252,253,0) 50%, rgba(252,252,253,.5) 60%, rgba(252,252,253,.9) 69%, #fcfcfd 78%),
    radial-gradient(ellipse 56% 80% at 84% 38%, #d9dce8 0%, rgba(220,223,234,.85) 35%, rgba(240,241,247,0) 100%),
    linear-gradient(#fdfdfe 25%, #fafbfd 36%, #e5e8f1 50%, #dadde9 59%, #e0e2ec 70%); }
.hud { display: flex; justify-content: center; height: 27px; padding-left: 90px; }
.pane { position: absolute; right: 10px; top: 8px; }
.pane svg { width: 13px; height: 13px; }
.splitter { position: absolute; left: -2px; top: 410px; flex-direction: column; gap: 3px; width: 10px; height: 39px; border: 1px solid #15151a; border-left: 0; background: #e6e8ee; }
.splitter i { border: 3px solid transparent; border-left: 0; border-right: 3px solid #222; }
.model { position: absolute; left: 561px; top: 90px; width: 520px; height: 500px; }
.spin { position: absolute; left: 1250px; top: 322px; width: 24px; height: 22px; }
.triad { position: absolute; left: 42px; top: 754px; width: 48px; height: 72px; overflow: visible; font: 12px "Liberation Serif", serif; }

/* bottom rows */
.sheets { display: flex; height: 20px; flex: none; background: #e3e5eb; font-size: 15px; line-height: 18px; }
.sheet { width: 77px; border: 1px solid #44445c; border-left: 0; background: #b7b9ca; }
.sheet.active { width: 47px; padding-right: 10px; border-top-color: #8888a0; background: #ccd4e6; font-size: 16px; }
.sheet.study { width: 132px; padding-right: 8px; }
.config { display: flex; align-items: center; height: 31px; flex: none; border-bottom: 1px solid #8c8f94; }
.combo { width: 16px; height: 22px; border: 1px solid #bbb; background: #c8cacd; }
.combo svg { width: 10px; height: 10px; }
.stack { width: 30px; height: 30px; border-right: 1px solid #fafafa; padding-right: 8px; }
.stack svg { width: 18px; height: 18px; }
.status { display: flex; justify-content: space-between; align-items: center; height: 21px; flex: none; border-top: 1px solid #111; font-size: 15px; line-height: 20px; color: #111; background: #d5d6d8; }
.editing { margin-right: 171px; }

/* taskbar */
.taskbar { display: flex; height: 50px; flex: none; background: linear-gradient(90deg, #d0e4ee 20%, #cfe0ed 60%, #d2dbea); overflow: hidden; }
.search { width: 393px; padding-left: 13px; border: 1px solid #b8bdc2; border-left: 0; background: #fff; font-size: 19px; color: #444; flex: none; }
.app-btn { width: 62px; padding-bottom: 1px; }
.app-btn:nth-of-type(-n+2) { width: 60px; }
.app-btn svg { width: 30px; height: 30px; }
.running { background: linear-gradient(#1273c4, #1273c4) center bottom / 51px 3px no-repeat; }
.current { background: #e8f0f6; border-bottom: 3px solid #1273c4; padding: 0; }
.sw { font: bold 16px "Liberation Sans", sans-serif; fill: #fff; }
.yr { font: bold 8px "Liberation Sans", sans-serif; fill: #fff; stroke: #222; stroke-width: 2px; paint-order: stroke; }
.bars { width: 4px; height: 27px; margin: 11px 13px 0 6px; border: solid #222; border-width: 0 1px; flex: none; }
.power { display: flex; align-items: center; margin-left: auto; margin-right: 129px; }
.plug { width: 14px; height: 28px; }
.battery { width: 40px; height: 25px; border: 2px solid #fff; outline: 1px solid #555; background: #189046; color: #fff; font-size: 13px; line-height: 21px; text-align: center; margin-left: 2px; }
.nub { width: 3px; height: 13px; border: 1px solid #777; border-left: 0; background: #fff; }
.weather { display: flex; align-items: center; gap: 11px; font-size: 19px; white-space: nowrap; }
.weather svg { width: 27px; height: 24px; }
.tray { display: flex; margin-left: 14px; }
.tray button { width: 30px; }
.tray svg { width: 21px; height: 21px; }
.tray .lang { font-size: 19px; color: #555; }
.tray .ime-mini, .ime-logo { background: #eb5a24; color: #fff; font-family: "Liberation Sans", sans-serif; font-weight: 700; transform: rotate(-8deg); }
.tray .ime-mini { width: 19px; height: 20px; margin: 15px 20px 0 11px; border-radius: 3px; font-size: 19px; }
.clock { display: flex; flex-direction: column; justify-content: center; width: 58px; font-size: 16px; line-height: 23px; overflow: hidden; }
.time { padding-left: 24px; }

/* floating input bar */
.ime { position: absolute; right: 0; bottom: 51px; display: flex; align-items: center; height: 30px; width: 174px; padding-left: 28px; background: #fff; }
.ime button { width: 30px; color: #1268c8; }
.ime svg { width: 18px; height: 19px; }
.ime .ime-cn { font-size: 18px; font-weight: 700; }
.ime-logo { position: absolute; left: -11px; top: -5px; width: 36px; height: 35px; border-radius: 5px; font-size: 36px; line-height: 36px; text-align: center; }
```
